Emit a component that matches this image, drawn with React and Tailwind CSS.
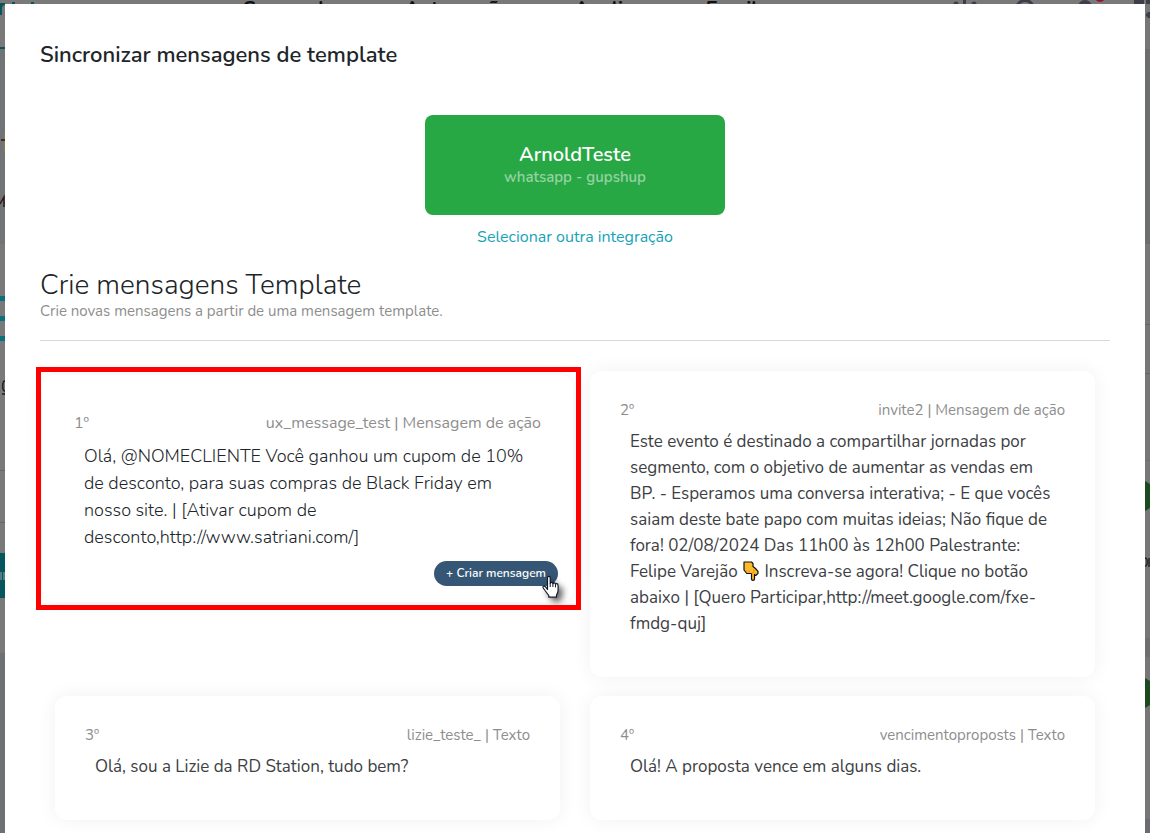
const messages = [
  {
    id: 2,
    meta: "invite2 | Mensagem de ação",
    body: (
      <>
        Este evento é destinado a compartilhar jornadas por segmento, com o
        objetivo de aumentar as vendas em BP. - Esperamos uma conversa
        interativa; - E que vocês saiam deste bate papo com muitas ideias; Não
        fique de fora! 02/08/2024 Das 11h00 às 12h00 Palestrante: Felipe Varejão{" "}
        <PointDown /> Inscreva-se agora! Clique no botão abaixo | [Quero
        Participar,http://meet.google.com/fxe-fmdg-quj]
      </>
    ),
  },
  { id: 3, meta: "lizie_teste_ | Texto", body: "Olá, sou a Lizie da RD Station, tudo bem?" },
  { id: 4, meta: "vencimentoproposts | Texto", body: "Olá! A proposta vence em alguns dias." },
];

function PointDown() {
  return (
    <svg role="img" aria-label="👇" viewBox="0 0 16 20" className="mx-px inline-block h-5 w-4 align-[-4px]">
      <path
        d="M1 1h7.500l1.500 1.500v3l2.500 2 2.500 2.800v2l-2.200 2.200-1.300-1v4.500c0 1-.7 1.400-1.500 1.400s-1.500-.5-1.500-1.400v-5.500H3.800L1 9z"
        fill="#fdb92c"
        stroke="#111"
        strokeWidth="1.200"
        strokeLinejoin="round"
      />
      <path d="M3.800 11.500V9.500M6.300 11.500V9.500M8.500 12.500l2.500-1.500V8.500" fill="none" stroke="#d08a14" strokeWidth="0.8" />
    </svg>
  );
}

function HandCursor() {
  return (
    <svg
      aria-hidden="true"
      viewBox="0 0 18 24"
      className="pointer-events-none absolute -right-[2px] top-[14px] h-6 w-[18px] drop-shadow-[4px_4px_3px_rgba(0,0,0,0.6)]"
    >
      <path
        d="M5.500 14.500V3c0-1 .5-1.600 1.300-1.600S8.200 2 8.200 3v5.500c.2-.8.700-1.100 1.300-1.100.8 0 1.300.5 1.400 1.300.2-.5.600-.8 1.200-.8.8 0 1.300.5 1.400 1.400.2-.4.600-.6 1.100-.6.9 0 1.500.7 1.500 1.700v4.600c0 1.500-.4 2.600-1 3.700l-.6 1.300v2.200H6.800v-1.700L3 15.500c-.6-.9-1.500-2-1.900-2.800-.3-.7 0-1.300.5-1.500.7-.3 1.400 0 1.900.6z"
        fill="#fff"
        stroke="#101828"
        strokeWidth="1.200"
        strokeLinejoin="round"
      />
      <path d="M8.200 8.500v3.500M10.900 8.700v3.300M13.500 9.500v2.800" stroke="#101828" strokeWidth="1" />
    </svg>
  );
}

function MessageCard({ id, meta, body }) {
  return (
    <article className="mx-[15px] rounded-xl bg-white px-[30px] pb-10 pt-[27px] shadow-[0_0_20px_rgba(0,0,0,0.06)]">
      <header className="mb-[7px] flex justify-between text-[15px] leading-6 text-[#8e8e8e]">
        <span>{id}º</span>
        <span>{meta}</span>
      </header>
      <p className="px-2.5 text-[17px] leading-[26px] text-[#3c4043]">{body}</p>
    </article>
  );
}

function ActiveCard() {
  return (
    <article className="relative mx-[2px] mt-1 rounded-xl bg-white pb-4 pl-8 pr-[15px] pt-9 shadow-[0_0_20px_rgba(0,0,0,0.06)]">
      <div className="pr-[17px]">
        <header className="mb-2 flex justify-between text-[16px] leading-6 text-[#8e8e8e]">
          <span>1º</span>
          <span>ux_message_test | Mensagem de ação</span>
        </header>
        <p className="px-2.5 text-[18px] font-light leading-[27px]">
          Olá, @NOMECLIENTE Você ganhou um cupom de 10% de desconto, para suas
          compras de Black Friday em nosso site. | [Ativar cupom de
          desconto,http://www.satriani.com/]
        </p>
      </div>
      <div className="mt-2.5 flex justify-end">
        <div className="relative">
          <button type="button" className="block rounded-full bg-[#355775] px-3 text-[12px] font-semibold leading-[25px] text-white">
            + Criar mensagem
          </button>
          <HandCursor />
        </div>
      </div>
      <div className="pointer-events-none absolute -bottom-2 -left-[6px] -right-2 -top-2 border-[5px] border-[#ff0000]" />
    </article>
  );
}

function PageHeader() {
  return (
    <div aria-hidden="true" className="flex h-1 justify-between overflow-hidden text-[20px] font-bold leading-[17px] text-[#111]">
      <svg viewBox="0 0 40 4" className="h-1 w-10 shrink-0" fill="#07565d">
        <rect x="0" y="3" width="5" height="1" />
        <rect x="12" y="2" width="3" height="2" />
        <rect x="31" y="2" width="3" height="2" />
      </svg>
      <div className="ml-[202px] mr-auto flex gap-[54px]">
        <span>Campanhas</span>
        <span>Automações</span>
        <span>Analisar</span>
        <span>Email</span>
      </div>
      <svg viewBox="0 0 200 4" className="h-1 w-[200px] shrink-0" fill="#3c3f47">
        <circle cx="6" cy="4" r="2.500" />
        <rect x="13" y="0" width="3" height="4" />
        <circle cx="24" cy="4" r="2.500" />
        <circle cx="75" cy="9" r="8.500" fill="none" stroke="#3c3f47" strokeWidth="3" />
        <circle cx="135" cy="7" r="7" />
        <circle cx="150" cy="-3" r="5" fill="#93142e" />
        <rect x="184" y="0" width="10" height="4" />
        <rect x="196" y="0" width="4" height="4" />
      </svg>
    </div>
  );
}

function LeftEdge() {
  return (
    <div aria-hidden="true" className="flex w-[5px] shrink-0 flex-col overflow-hidden bg-[#797979]">
      <svg viewBox="0 0 5 829" className="h-[829px] w-[5px]">
        <path d="M1 0v11M1 3c1-2 2-3 4-3" fill="none" stroke="#07565d" strokeWidth="2" />
        <rect width="5" height="2" y="43" fill="#07565d" />
        <rect width="5" height="195" y="45" fill="#717377" />
        <rect width="1" height="18" x="4" y="130" fill="#8f7d3c" />
        <path d="M1 136h4M0 200l4-7v10" fill="none" stroke="#2a1a18" strokeWidth="1.500" />
        <rect width="5" height="5" y="292" fill="#07717c" />
        <rect width="5" height="5" y="312" fill="#07717c" />
        <rect width="5" height="5" y="332" fill="#07717c" />
        <path d="M5 377c-3 0-3 10 0 10M2 390h3" fill="none" stroke="#1d1d1d" strokeWidth="1.500" />
        <rect width="5" height="1" y="466" fill="#666" />
        <rect width="5" height="1" y="518" fill="#666" />
        <rect width="5" height="45" y="549" fill="#06565d" />
        <path d="M1 568v8M4 568v8" stroke="#6d8d90" strokeWidth="1.500" />
        <rect width="5" height="180" y="649" fill="#6f7073" />
      </svg>
    </div>
  );
}

function RightEdge() {
  return (
    <div aria-hidden="true" className="flex w-[5px] shrink-0 flex-col overflow-hidden bg-[#777]">
      <svg viewBox="0 0 5 829" className="h-[829px] w-[5px]">
        <path d="M1 11h4M4 8v6" stroke="#3c3f47" strokeWidth="3" />
        <rect width="5" height="195" y="45" fill="#6b6e6d" />
        <rect width="5" height="1" y="320" fill="#666" />
        <rect width="5" height="1" y="369" fill="#666" />
        <rect width="5" height="1" y="456" fill="#6c6c6c" />
        <path d="M0 477l5 3v24l-5 3z" fill="#1c4a20" />
        <path d="M0 554c3 0 3 8 0 8M4 554v9" fill="none" stroke="#2a2420" strokeWidth="1.500" />
        <rect width="5" height="19" y="634" fill="#6f6f70" />
        <path d="M0 674l5 3v24l-5 3z" fill="#1c4a20" />
        <rect width="5" height="14" y="815" fill="#6c6c70" />
      </svg>
    </div>
  );
}

export default function App() {
  return (
    <div className="h-screen overflow-hidden bg-[#797979] font-['Nunito',sans-serif] text-[#212529]">
      <PageHeader />
      <div className="flex">
        <LeftEdge />
        <main role="dialog" aria-labelledby="title" className="min-w-0 flex-1 bg-white px-[35px] pb-10 pt-9">
          <h1 id="title" className="text-[22px] font-semibold leading-[30px]">
            Sincronizar mensagens de template
          </h1>

          <section className="mt-[45px] flex flex-col items-center">
            <div className="flex h-[100px] w-[300px] flex-col items-center justify-center rounded-lg bg-[#28a745] text-white">
              <strong className="text-[20px] font-semibold leading-6">ArnoldTeste</strong>
              <span className="text-[15px] font-semibold leading-5 text-white/50">whatsapp - gupshup</span>
            </div>
            <a href="#integracoes" className="mt-2.5 text-[16px] leading-6 text-[#17a2b8]">
              Selecionar outra integração
            </a>
          </section>

          <section className="mt-5">
            <h2 className="text-[28px] font-light leading-8">Crie mensagens Template</h2>
            <p className="text-[15px] leading-5 text-[#8e8e8e]">
              Crie novas mensagens a partir de uma mensagem template.
            </p>
            <hr className="mt-[19px] border-[#d9d9d9]" />

            <div className="mt-[30px] grid grid-cols-2 items-start gap-y-[19px]">
              <ActiveCard />
              {messages.map((m) => (
                <MessageCard key={m.id} {...m} />
              ))}
            </div>
          </section>
        </main>
        <RightEdge />
      </div>
    </div>
  );
}
